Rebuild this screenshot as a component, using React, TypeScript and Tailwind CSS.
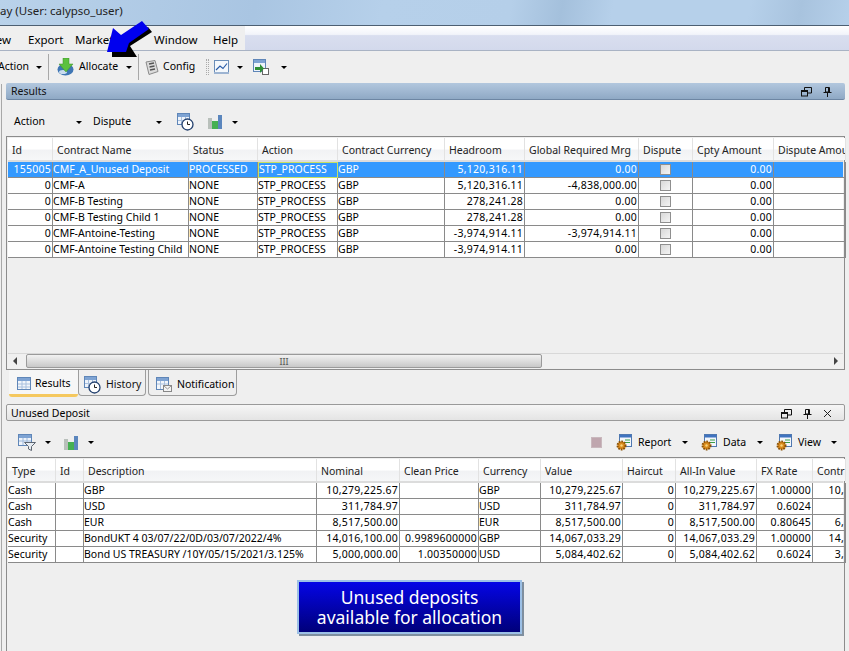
import React from 'react';

const Caret = ({ className = '' }: { className?: string }) => (
  <span className={`inline-block shrink-0 w-0 h-0 border-x-[3px] border-x-transparent border-t-[3px] border-t-black ${className}`} />
);

const ChartIcon = () => (
  <svg width="16" height="15" viewBox="0 0 16 15">
    <rect x="0.5" y="0.5" width="14" height="12" fill="#f4f8fc" stroke="#6a8db8" />
    <rect x="0" y="12" width="15" height="2" fill="#9db4d2" />
    <path d="M2 10 6 6l3 2.500 4-5" fill="none" stroke="#2a5ca8" strokeWidth="1.2" />
  </svg>
);

const BarsIcon = () => (
  <svg width="15" height="16" viewBox="0 0 15 16">
    <rect x="0" y="4" width="4" height="11" fill="#b9c0bb" />
    <rect x="4" y="7" width="6" height="8" fill="#46b052" />
    <rect x="10" y="1" width="4" height="14" fill="#5b86bd" />
  </svg>
);

const GridIcon = ({ w = 14 }: { w?: number }) => (
  <svg width={w} height="13" viewBox="0 0 14 13">
    <rect x="0.5" y="0.5" width="13" height="12" fill="#f2f6fb" stroke="#5f86b8" />
    <rect x="1" y="1" width="12" height="3" fill="#7ea3d3" />
    <path d="M5 4v8M9 4v8M1 7h12M1 10h12" stroke="#a9c0de" />
  </svg>
);

const NotifyIcon = () => (
  <svg width="16" height="15" viewBox="0 0 16 15">
    <rect x="0.5" y="0.5" width="12" height="12" fill="#f2f6fb" stroke="#5f86b8" />
    <rect x="1" y="1" width="11" height="3" fill="#7ea3d3" />
    <path d="M4.500 4v8M8.500 4v8M1 7h11" stroke="#a9c0de" />
    <rect x="7.500" y="8.500" width="8" height="6" fill="#f4f4f4" stroke="#888" />
    <path d="M8 9l3.500 3L15 9" fill="none" stroke="#999" />
  </svg>
);

const ClockGridIcon = () => (
  <svg width="17" height="18" viewBox="0 0 17 18">
    <rect x="0.5" y="0.5" width="12" height="11" fill="#eef3fa" stroke="#5f86b8" />
    <rect x="1" y="1" width="11" height="3" fill="#7ea3d3" />
    <path d="M4.500 4v7M8.500 4v7M1 7.500h11" stroke="#a9c0de" />
    <circle cx="10.500" cy="11.500" r="5.500" fill="#fff" stroke="#23406e" strokeWidth="1.3" />
    <path d="M10.500 8.500v3h2.500" fill="none" stroke="#222" />
  </svg>
);

const GearPanelIcon = () => (
  <svg width="16" height="17" viewBox="0 0 16 17">
    <rect x="3.500" y="0.500" width="12" height="12" fill="#f3f6fb" stroke="#4f78b0" />
    <rect x="4" y="1" width="11" height="2.500" fill="#3f73c0" />
    <path d="M9 6h5M9 8.500h5" stroke="#3aa04a" />
    <circle cx="5.500" cy="11.500" r="4" fill="#d98a1c" stroke="#8a5208" strokeDasharray="1.6 1" strokeWidth="2" />
    <circle cx="5.500" cy="11.500" r="1.200" fill="#f7d27a" />
  </svg>
);

const FilterGridIcon = () => (
  <svg width="18" height="17" viewBox="0 0 18 17">
    <rect x="0.500" y="0.500" width="13" height="11" fill="#eef3fa" stroke="#5f86b8" />
    <rect x="1" y="1" width="12" height="3" fill="#7ea3d3" />
    <path d="M5 4v7M9 4v7M1 7h12" stroke="#9db8da" />
    <path d="M6.500 8.500h11l-4 4v4l-3-1.500v-2.500z" fill="#e8edf3" stroke="#5c6570" />
  </svg>
);

const RestoreIcon = () => (
  <svg width="11" height="10" viewBox="0 0 11 10" fill="none" stroke="#111">
    <rect x="0.500" y="3.500" width="6" height="5.500" />
    <path d="M0.500 4.500h6" />
    <path d="M3.500 3V.5h7V6H7" />
  </svg>
);

const PinIcon = () => (
  <svg width="9" height="10" viewBox="0 0 9 10" fill="none" stroke="#111">
    <path d="M2.500.5h4v4.500h-4zM.5 5.500h8M4.500 6v4M5.500 1v4" />
  </svg>
);

const topCols = 'grid-cols-[45px_136px_69px_80px_107px_80px_114px_54px_81px_72px]';
const botCols = 'grid-cols-[48px_28px_233px_83px_79px_62px_82px_53px_81px_56px_33px]';

const HeaderCell = ({ label }: { label: string }) => (
  <div className="h-[22px] pl-[4px] pt-[5px] leading-[14px] whitespace-nowrap overflow-hidden border-r border-[#e2e2e2] bg-[linear-gradient(#ffffff_0%,#ffffff_50%,#f1f2f4_55%,#f6f7f8_100%)] text-[#222]">
    {label}
  </div>
);

const Cell = ({ text, right }: { text: string; right?: boolean }) => (
  <div className={`h-4 leading-[15px] whitespace-nowrap overflow-hidden border-r border-b border-[#8a8a8a] ${right ? 'text-right pr-[1px] tracking-[0.25px]' : ''}`}>
    {text}
  </div>
);

const topHeaders = ['Id', 'Contract Name', 'Status', 'Action', 'Contract Currency', 'Headroom', 'Global Required Mrg', 'Dispute', 'Cpty Amount', 'Dispute Amou'];
const topRows = [
  ['155005', 'CMF_A_Unused Deposit', 'PROCESSED', 'STP_PROCESS', 'GBP', '5,120,316.11', '0.00', '0.00'],
  ['0', 'CMF-A', 'NONE', 'STP_PROCESS', 'GBP', '5,120,316.11', '-4,838,000.00', '0.00'],
  ['0', 'CMF-B Testing', 'NONE', 'STP_PROCESS', 'GBP', '278,241.28', '0.00', '0.00'],
  ['0', 'CMF-B Testing Child 1', 'NONE', 'STP_PROCESS', 'GBP', '278,241.28', '0.00', '0.00'],
  ['0', 'CMF-Antoine-Testing', 'NONE', 'STP_PROCESS', 'GBP', '-3,974,914.11', '-3,974,914.11', '0.00'],
  ['0', 'CMF-Antoine Testing Child', 'NONE', 'STP_PROCESS', 'GBP', '-3,974,914.11', '0.00', '0.00'],
];

const botHeaders = ['Type', 'Id', 'Description', 'Nominal', 'Clean Price', 'Currency', 'Value', 'Haircut', 'All-In Value', 'FX Rate', 'Contr'];
const botRows = [
  ['Cash', '', 'GBP', '10,279,225.67', '', 'GBP', '10,279,225.67', '0', '10,279,225.67', '1.00000', '10,'],
  ['Cash', '', 'USD', '311,784.97', '', 'USD', '311,784.97', '0', '311,784.97', '0.6024', ''],
  ['Cash', '', 'EUR', '8,517,500.00', '', 'EUR', '8,517,500.00', '0', '8,517,500.00', '0.80645', '6,'],
  ['Security', '', 'BondUKT 4 03/07/22/0D/03/07/2022/4%', '14,016,100.00', '0.9989600000', 'GBP', '14,067,033.29', '0', '14,067,033.29', '1.00000', '14,'],
  ['Security', '', 'Bond US TREASURY /10Y/05/15/2021/3.125%', '5,000,000.00', '1.00350000', 'USD', '5,084,402.62', '0', '5,084,402.62', '0.6024', '3,'],
];
const botRight = [false, false, false, true, true, false, true, true, true, true, true];

const TopRow = ({ row, selected }: { row: string[]; selected: boolean }) => (
  <div className={`grid ${topCols} ${selected ? 'bg-[#3399ff] text-white' : 'bg-white'}`}>
    <Cell text={row[0]} right />
    <Cell text={row[1]} />
    <Cell text={row[2]} />
    {selected ? (
      <div className="h-4 leading-[13px] border border-[#c8e060] whitespace-nowrap overflow-hidden">{row[3]}</div>
    ) : (
      <Cell text={row[3]} />
    )}
    <Cell text={row[4]} />
    <Cell text={row[5]} right />
    <Cell text={row[6]} right />
    <div className="h-4 flex items-center justify-center border-r border-b border-[#8a8a8a]">
      <span className="w-[11px] h-[11px] border border-[#8f8f8f] bg-[linear-gradient(135deg,#d8d8d8,#f4f4f4)]" />
    </div>
    <Cell text={row[7]} right />
    <Cell text="" />
  </div>
);

export default function App() {
  return (
    <div className="relative w-[849px] h-[651px] overflow-hidden bg-[#efefef] text-[10.5px] text-black font-['Noto_Sans','Liberation_Sans',sans-serif]">
      {/* title bar */}
      <div className="h-[25px] pt-[2px] text-[11.5px] text-[#222] whitespace-nowrap bg-[linear-gradient(100deg,#b9d2ea_0%,#a9c5e2_30%,#b6d0ea_45%,#b5cfe9_60%,#a4c0dc_66%,#b6d0ea_72%,#b6d0ea_88%,#a8c3de_94%,#b6d0ea_100%)]">
        ay (User: calypso_user)
      </div>
      <div className="h-px bg-[#4d5f72]" />

      {/* menu bar */}
      <div className="h-[25px] border-b border-[#a9b3c4] bg-[linear-gradient(#ffffff_0%,#f2f4fa_35%,#d9deef_40%,#d3d9ec_100%)]">
        <div className="flex w-[245px] h-full items-center bg-[#efefef] text-[11.5px] pt-[4px]">
          <span className="ml-[-14px] w-[42px] shrink-0">View</span>
          <span className="w-[47px] shrink-0">Export</span>
          <span className="w-[79px] shrink-0">Market</span>
          <span className="w-[59px] shrink-0">Window</span>
          <span>Help</span>
        </div>
      </div>

      {/* main toolbar */}
      <div className="h-[32px] flex items-center whitespace-nowrap">
        <span className="ml-[-2px] w-[29px] shrink-0">Action</span>
        <Caret className="ml-[9px]" />
        <span className="ml-[6px] w-px h-[26px] bg-[#a8a8a8]" />
        <svg className="ml-[8px]" width="18" height="18" viewBox="0 0 18 18">
          <ellipse cx="8.500" cy="11.500" rx="8" ry="6" fill="#3f76b4" />
          <ellipse cx="6" cy="14" rx="4" ry="2" fill="#c9dcef" />
          <path d="M6 0h6v6h4l-7 8-7-8h4z" fill="#5cc13e" stroke="#3b8c2a" strokeWidth="0.5" />
        </svg>
        <span className="ml-[4px] w-[38px] shrink-0">Allocate</span>
        <Caret className="ml-[9px]" />
        <span className="ml-[6px] w-px h-[26px] bg-[#a8a8a8]" />
        <svg className="ml-[6px]" width="14" height="15" viewBox="0 0 14 15">
          <path d="M1 2l9-1.500 3 11-9 3z" fill="#dcdcdc" stroke="#8a8a8a" />
          <path d="M4 4l5-1M4.500 7l5-1M5 10l5-1" stroke="#555" strokeWidth="1.300" />
        </svg>
        <span className="ml-[4px] w-[32px] shrink-0">Config</span>
        <span className="ml-[11px] w-[3px] h-[16px] border-x border-dotted border-[#aaa]" />
        <span className="ml-[5px] flex"><ChartIcon /></span>
        <Caret className="ml-[7px]" />
        <span className="ml-[10px] flex">
          <svg width="16" height="16" viewBox="0 0 16 16">
            <rect x="0.500" y="0.500" width="12" height="12" fill="#eef3fa" stroke="#5f86b8" />
            <rect x="1" y="1" width="11" height="3" fill="#7ea3d3" />
            <rect x="9.500" y="9.500" width="6" height="6" fill="#fff" stroke="#666" />
            <path d="M2 8h5V5l4 4.500L7 14v-3H2z" fill="#2f8f36" />
          </svg>
        </span>
        <Caret className="ml-[12px]" />
      </div>

      {/* results panel */}
      <div className="ml-[6px] w-[839px] h-[17px] pl-[5px] pt-[2px] flex items-center justify-between rounded-[2px] border-b border-[#6d86a3] bg-[linear-gradient(#b2c7de,#8fa9c5)] text-[#111]">
        <span>Results</span>
        <span className="flex items-center gap-[11px] mr-[13px]"><RestoreIcon /><PinIcon /></span>
      </div>
      <div className="h-[36px] pt-[8px] pl-[14px] flex items-center">
        <span className="w-[62px] shrink-0">Action</span>
        <Caret className="mr-[11px]" />
        <span className="w-[63px] shrink-0">Dispute</span>
        <Caret />
        <span className="ml-[15px] flex"><ClockGridIcon /></span>
        <span className="ml-[14px] flex"><BarsIcon /></span>
        <Caret className="ml-[9px]" />
      </div>
      <div className="ml-[6px] w-[839px] h-[234px] border border-[#8c8c8c] p-px bg-[#efefef] flex flex-col">
        <div className={`grid ${topCols} border-b-2 border-[#dcdcdc]`}>
          {topHeaders.map((h) => <HeaderCell key={h} label={h} />)}
        </div>
        {topRows.map((r, i) => <TopRow key={r[1]} row={r} selected={i === 0} />)}
        <div className="flex-1" />
        <div className="h-[15px] flex items-center border-t border-[#d8d8d8] bg-[#f0f0f0]">
          <span className="ml-[5px] w-0 h-0 border-y-[4px] border-y-transparent border-r-[4px] border-r-[#444]" />
          <div className="ml-[9px] w-[516px] h-[14px] border border-[#9a9a9a] rounded-[2px] bg-[linear-gradient(#f2f2f2,#c8c8c8)] flex items-center justify-center text-[9px] leading-none text-[#555]">III</div>
          <span className="ml-auto mr-[5px] w-0 h-0 border-y-[4px] border-y-transparent border-l-[4px] border-l-[#444]" />
        </div>
      </div>

      {/* tabs */}
      <div className="h-[27px] ml-[9px] flex">
        <div className="w-[69px] h-[27px] flex items-center gap-[4px] pl-[8px] pt-[3px] border-b-[3px] border-[#f5c85e] rounded-b-[3px] bg-[#f6f6f6]"><GridIcon /><span>Results</span></div>
        <div className="w-[68px] h-[26px] flex items-center gap-[5px] pl-[5px] pt-[4px] border border-[#9d9d9d] border-t-0 rounded-b-[4px]"><ClockGridIcon /><span className="text-[#111]">History</span></div>
        <div className="ml-[2px] w-[89px] h-[26px] flex items-center gap-[5px] pl-[7px] pt-[4px] border border-[#9d9d9d] border-t-0 rounded-b-[4px]"><NotifyIcon /><span>Notification</span></div>
      </div>
      <div className="h-[7px]" />

      {/* unused deposit panel */}
      <div className="ml-[6px] w-[839px] h-[17px] pl-[4px] pt-[2px] flex items-center justify-between rounded-[2px] border border-[#9a9a9a] bg-[linear-gradient(#f6f6f6,#e4e4e4)]">
        <span>Unused Deposit</span>
        <span className="flex items-center gap-[11px] mr-[12px]">
          <RestoreIcon /><PinIcon />
          <svg width="9" height="9" viewBox="0 0 9 9" stroke="#222"><path d="M1 1l7 7M8 1L1 8" /></svg>
        </span>
      </div>
      <div className="h-[36px] pt-[7px] flex items-center">
        <span className="ml-[18px] flex"><FilterGridIcon /></span>
        <Caret className="ml-[9px]" />
        <span className="ml-[13px] flex"><BarsIcon /></span>
        <Caret className="ml-[9px]" />
        <span className="ml-auto w-[11px] h-[11px] border border-[#c9b8bd] bg-[#bfa6ae]" />
        <span className="ml-[14px] flex"><GearPanelIcon /></span>
        <span className="ml-[6px] w-[34px] shrink-0">Report</span>
        <Caret className="ml-[10px]" />
        <span className="ml-[13px] flex"><GearPanelIcon /></span>
        <span className="ml-[6px] w-[23px] shrink-0">Data</span>
        <Caret className="ml-[11px]" />
        <span className="ml-[13px] flex"><GearPanelIcon /></span>
        <span className="ml-[6px] w-[22px] shrink-0">View</span>
        <Caret className="ml-[11px] mr-[12px]" />
      </div>
      <div className="ml-[6px] w-[839px] h-[200px] border border-b-0 border-[#8c8c8c] p-px">
        <div className={`grid ${botCols} border-b-2 border-[#dcdcdc]`}>
          {botHeaders.map((h) => <HeaderCell key={h} label={h} />)}
        </div>
        {botRows.map((r) => (
          <div key={r[2]} className={`grid ${botCols} bg-white`}>
            {r.map((c, i) => <Cell key={i} text={c} right={botRight[i]} />)}
          </div>
        ))}
      </div>

      {/* outer frame edge on the left */}
      <div className="absolute left-[1px] top-[84px] bottom-0 w-px bg-[#a8a8a8]" />

      {/* annotations */}
      <div className="absolute left-[297px] top-[580px] w-[225px] h-[54px] flex items-center justify-center text-center border-2 border-[#9cc0e6] bg-[linear-gradient(#0505e6,#00007a)] shadow-[2px_2px_0_#7f8f9f] text-white text-[17.5px] leading-[20px] font-['Open_Sans',sans-serif]">
        <p>Unused deposits<br />available for allocation</p>
      </div>
      <svg className="absolute left-[100px] top-[15px]" width="60" height="50" viewBox="100 15 60 50">
        <polygon points="112,52 112,57 137,57 130,46 152,32 148,27 125,42" fill="#000" />
        <polygon points="107,52 113,28 121,35 142,21 149,29 129,43 126,52" fill="#0000ee" />
      </svg>
    </div>
  );
}
